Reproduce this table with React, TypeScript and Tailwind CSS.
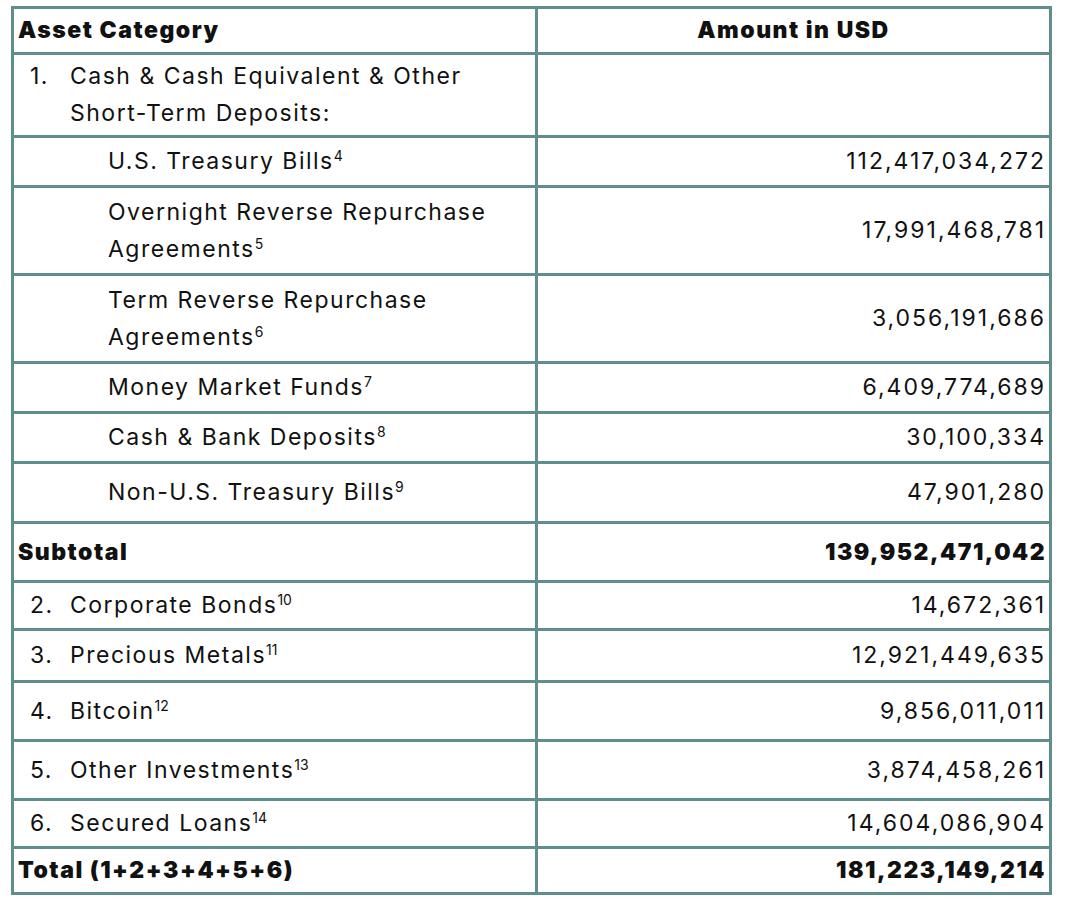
type Row = {
  num?: string;
  label: string[];
  sup?: string;
  value?: string;
  kind: "main" | "sub" | "bold";
  h: string;
};

const rows: Row[] = [
  { num: "1.", label: ["Cash & Cash Equivalent & Other", "Short-Term Deposits:"], kind: "main", h: "h-[83px]" },
  { label: ["U.S. Treasury Bills"], sup: "4", value: "112,417,034,272", kind: "sub", h: "h-[50px]" },
  { label: ["Overnight Reverse Repurchase", "Agreements"], sup: "5", value: "17,991,468,781", kind: "sub", h: "h-[88px]" },
  { label: ["Term Reverse Repurchase", "Agreements"], sup: "6", value: "3,056,191,686", kind: "sub", h: "h-[88px]" },
  { label: ["Money Market Funds"], sup: "7", value: "6,409,774,689", kind: "sub", h: "h-[50px]" },
  { label: ["Cash & Bank Deposits"], sup: "8", value: "30,100,334", kind: "sub", h: "h-[50px]" },
  { label: ["Non-U.S. Treasury Bills"], sup: "9", value: "47,901,280", kind: "sub", h: "h-[60px]" },
  { label: ["Subtotal"], value: "139,952,471,042", kind: "bold", h: "h-[59px]" },
  { num: "2.", label: ["Corporate Bonds"], sup: "10", value: "14,672,361", kind: "main", h: "h-[48px]" },
  { num: "3.", label: ["Precious Metals"], sup: "11", value: "12,921,449,635", kind: "main", h: "h-[52px]" },
  { num: "4.", label: ["Bitcoin"], sup: "12", value: "9,856,011,011", kind: "main", h: "h-[59px]" },
  { num: "5.", label: ["Other Investments"], sup: "13", value: "3,874,458,261", kind: "main", h: "h-[59px]" },
  { num: "6.", label: ["Secured Loans"], sup: "14", value: "14,604,086,904", kind: "main", h: "h-[48px]" },
  { label: ["Total (1+2+3+4+5+6)"], value: "181,223,149,214", kind: "bold", h: "h-[46px]" },
];

function Label({ row }: { row: Row }) {
  return (
    <span>
      {row.label.map((line, i) => (
        <span key={i} className="block">
          {line}
          {i === row.label.length - 1 && row.sup && (
            <sup className="text-[14px] tracking-normal relative -top-[8px]">{row.sup}</sup>
          )}
        </span>
      ))}
    </span>
  );
}

export default function App() {
  return (
    <div className="bg-white w-[1066px] h-[902px] pt-[6px] pl-[11px] text-[#111] font-['Inter','Noto_Sans',sans-serif] text-[23px] tracking-[1.5px]">
      <table className="w-[1041px] border-collapse border-[3px] border-[#5f8f8c] table-fixed">
        <colgroup>
          <col className="w-[524px]" />
          <col />
        </colgroup>
        <thead>
          <tr className="h-[46px]">
            <th className="border-[3px] border-[#5f8f8c] text-left px-[4px] font-black">Asset Category</th>
            <th className="border-[3px] border-[#5f8f8c] text-center px-[4px] font-black">Amount in USD</th>
          </tr>
        </thead>
        <tbody>
          {rows.map((row, i) => (
            <tr key={i} className={row.h}>
              <td className="border-[3px] border-[#5f8f8c] px-[4px] align-middle leading-[37px]">
                {row.kind === "bold" && <span className="font-black">{row.label[0]}</span>}
                {row.kind === "sub" && (
                  <div className="pl-[90px]">
                    <Label row={row} />
                  </div>
                )}
                {row.kind === "main" && (
                  <div className="flex pl-[12px]">
                    <span className="w-[40px] shrink-0">{row.num}</span>
                    <Label row={row} />
                  </div>
                )}
              </td>
              <td
                className={
                  row.kind === "bold"
                    ? "border-[3px] border-[#5f8f8c] pl-[4px] pr-[3px] text-right align-middle font-black"
                    : "border-[3px] border-[#5f8f8c] pl-[4px] pr-[3px] text-right align-middle tracking-[2px]"
                }
              >
                {row.value}
              </td>
            </tr>
          ))}
        </tbody>
      </table>
    </div>
  );
}
